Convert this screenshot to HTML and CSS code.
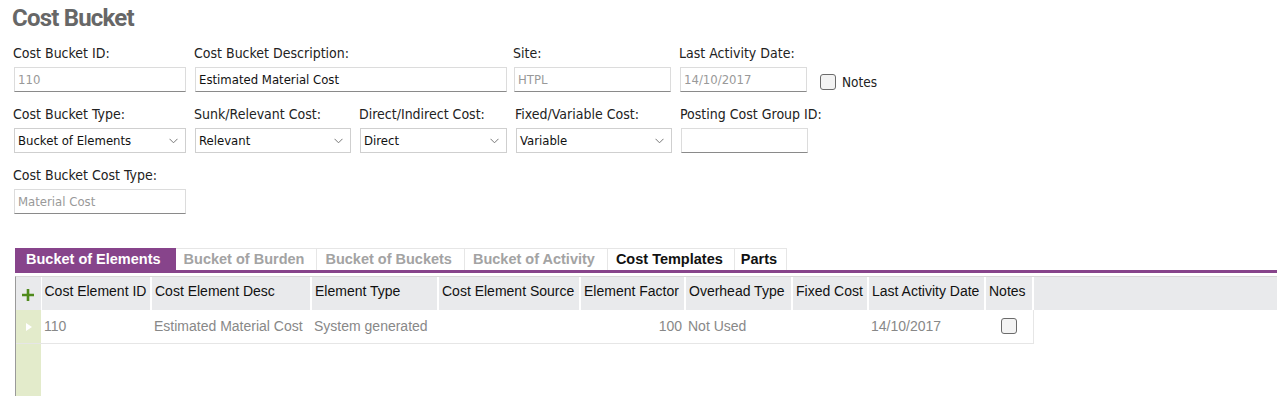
FILE: index.html
```html
<!DOCTYPE html>
<html lang="en">
<head>
    <meta charset="UTF-8">
    <meta name="viewport" content="width=device-width, initial-scale=1.0">
    <title>Cost Bucket</title>
    <link rel="stylesheet" href="styles.css">
</head>
<body>
    <h1 class="page-title">Cost Bucket</h1>

    <div class="form">
        <div class="form-row">
            <div class="field w172">
                <label>Cost Bucket ID:</label>
                <input type="text" class="readonly" value="110" readonly>
            </div>
            <div class="field w312">
                <label>Cost Bucket Description:</label>
                <input type="text" value="Estimated Material Cost">
            </div>
            <div class="field w157 site">
                <label>Site:</label>
                <input type="text" class="readonly" value="HTPL" readonly>
            </div>
            <div class="field w127">
                <label>Last Activity Date:</label>
                <input type="text" class="readonly" value="14/10/2017" readonly>
            </div>
            <label class="notes-check"><span class="box"></span>Notes</label>
        </div>

        <div class="form-row">
            <div class="field w172">
                <label>Cost Bucket Type:</label>
                <div class="select">
                    <span>Bucket of Elements</span>
                    <svg width="9" height="6" viewBox="0 0 9 6"><path d="M0.5 0.8 L4.5 4.8 L8.5 0.8" fill="none" stroke="#777" stroke-width="1"/></svg>
                </div>
            </div>
            <div class="field w156">
                <label>Sunk/Relevant Cost:</label>
                <div class="select">
                    <span>Relevant</span>
                    <svg width="9" height="6" viewBox="0 0 9 6"><path d="M0.5 0.8 L4.5 4.8 L8.5 0.8" fill="none" stroke="#777" stroke-width="1"/></svg>
                </div>
            </div>
            <div class="field w147">
                <label>Direct/Indirect Cost:</label>
                <div class="select">
                    <span>Direct</span>
                    <svg width="9" height="6" viewBox="0 0 9 6"><path d="M0.5 0.8 L4.5 4.8 L8.5 0.8" fill="none" stroke="#777" stroke-width="1"/></svg>
                </div>
            </div>
            <div class="field w156">
                <label>Fixed/Variable Cost:</label>
                <div class="select">
                    <span>Variable</span>
                    <svg width="9" height="6" viewBox="0 0 9 6"><path d="M0.5 0.8 L4.5 4.8 L8.5 0.8" fill="none" stroke="#777" stroke-width="1"/></svg>
                </div>
            </div>
            <div class="field w127">
                <label>Posting Cost Group ID:</label>
                <input type="text" value="">
            </div>
        </div>

        <div class="form-row">
            <div class="field w172">
                <label>Cost Bucket Cost Type:</label>
                <input type="text" class="readonly" value="Material Cost" readonly>
            </div>
        </div>
    </div>

    <div class="tabs">
        <div class="tab active">Bucket of Elements</div>
        <div class="tab disabled">Bucket of Burden</div>
        <div class="tab disabled">Bucket of Buckets</div>
        <div class="tab disabled">Bucket of Activity</div>
        <div class="tab">Cost Templates</div>
        <div class="tab parts">Parts</div>
    </div>

    <div class="grid">
        <table>
            <colgroup>
                <col class="c-strip">
                <col class="c-id">
                <col class="c-desc">
                <col class="c-type">
                <col class="c-source">
                <col class="c-factor">
                <col class="c-overhead">
                <col class="c-fixed">
                <col class="c-last">
                <col class="c-notes">
                <col>
            </colgroup>
            <thead>
                <tr>
                    <th class="strip">
                        <svg width="12" height="12" viewBox="0 0 12 12"><path d="M6 0 V12 M0 6 H12" stroke="#4f8a1c" stroke-width="2.6"/></svg>
                    </th>
                    <th>Cost Element ID</th>
                    <th>Cost Element Desc</th>
                    <th>Element Type</th>
                    <th>Cost Element Source</th>
                    <th>Element Factor</th>
                    <th>Overhead Type</th>
                    <th>Fixed Cost</th>
                    <th>Last Activity Date</th>
                    <th>Notes</th>
                    <th class="filler"></th>
                </tr>
            </thead>
            <tbody>
                <tr class="data">
                    <td class="strip">
                        <svg width="6" height="8" viewBox="0 0 6 8"><path d="M0 0 L6 4 L0 8 Z" fill="#fff"/></svg>
                    </td>
                    <td>110</td>
                    <td>Estimated Material Cost</td>
                    <td>System generated</td>
                    <td></td>
                    <td class="num">100</td>
                    <td>Not Used</td>
                    <td></td>
                    <td>14/10/2017</td>
                    <td class="check"><span class="box"></span></td>
                    <td class="filler"></td>
                </tr>
                <tr class="empty">
                    <td class="strip"></td>
                    <td colspan="10"></td>
                </tr>
            </tbody>
        </table>
    </div>
</body>
</html>
```

FILE: styles.css
```css
body {
    margin: 0;
    padding: 0 0 0 12px;
    background-color: #fff;
    font-family: "DejaVu Sans Condensed", "DejaVu Sans", sans-serif;
    font-size: 14px;
    color: #222;
}

.page-title {
    margin: 0;
    padding-top: 3px;
    height: 42px;
    font-family: Roboto, "DejaVu Sans Condensed", sans-serif;
    font-size: 24px;
    font-weight: bold;
    letter-spacing: -0.8px;
    color: #676767;
    line-height: 30px;
}

.form {
    padding-left: 2px;
}
.form-row {
    display: flex;
    gap: 9px;
    margin-bottom: 14px;
}
.field label {
    display: block;
    height: 16px;
    line-height: 16px;
    margin-bottom: 6px;
    margin-left: -1px;
    white-space: nowrap;
}
.w127 { width: 127px; }
.w147 { width: 147px; }
.w156 { width: 156px; }
.w157 { width: 157px; }
.w172 { width: 172px; }
.w312 { width: 312px; }
.site { margin-left: -2px; }

.field input {
    box-sizing: border-box;
    width: 100%;
    height: 25px;
    margin: 0;
    padding: 0 3px;
    border: 1px solid #dcdcdc;
    border-bottom-color: #8a8a8a;
    font-family: inherit;
    font-size: 13px;
    color: #111;
    background: #fff;
    outline: none;
}
.field input.readonly {
    color: #999;
}

.select {
    box-sizing: border-box;
    display: flex;
    align-items: center;
    justify-content: space-between;
    height: 25px;
    padding: 0 7px 0 3px;
    border: 1px solid #cfcfcf;
    font-size: 13px;
    color: #111;
}

.notes-check {
    display: flex;
    align-items: center;
    align-self: flex-end;
    height: 25px;
    margin-left: 4px;
    margin-bottom: -2px;
    font-size: 13.5px;
}
.box {
    display: inline-block;
    box-sizing: border-box;
    width: 16px;
    height: 16px;
    border: 1px solid #6b6b6b;
    border-radius: 3px;
    background: #f3f3f3;
}
.notes-check .box {
    margin-right: 6px;
}

.tabs {
    display: flex;
    margin: 34px 0 0 3px;
    border-bottom: 3px solid #87448b;
    font-family: "Liberation Sans", Arial, sans-serif;
    font-size: 14.5px;
    font-weight: bold;
}
.tab {
    height: 21px;
    line-height: 21px;
    padding: 0 11px 0 8px;
    border: 1px solid #e6e6e6;
    border-bottom: none;
    border-left: none;
    color: #111;
}
.tab.active {
    padding: 0 14px 0 11px;
    background-color: #87448b;
    border-color: #87448b;
    color: #fff;
}
.tab.disabled {
    padding: 0 12px 0 8px;
    color: #a3a3a3;
}
.tab.parts {
    padding: 0 9px 0 6px;
}

.grid {
    margin: 3px 0 0 3px;
    border-left: 1px solid #9a9a9a;
    border-top: 1px solid #d8d8d8;
    font-family: "Liberation Sans", Arial, sans-serif;
    font-size: 14px;
}
.grid table {
    width: 100%;
    table-layout: fixed;
    border-collapse: collapse;
}
.c-strip { width: 25px; }
.c-id { width: 110px; }
.c-desc { width: 160px; }
.c-type { width: 127px; }
.c-source { width: 142px; }
.c-factor { width: 105px; }
.c-overhead { width: 107px; }
.c-fixed { width: 76px; }
.c-last { width: 117px; }
.c-notes { width: 48px; }

.grid th {
    box-sizing: border-box;
    height: 33px;
    padding: 0 3px 6px;
    background-color: #e9eaec;
    border-right: 2px solid #fff;
    font-weight: normal;
    text-align: left;
    color: #111;
    white-space: nowrap;
    overflow: hidden;
}
.grid th.strip {
    padding: 5px 0 0 0;
    text-align: center;
    border-right: 1px solid #fff;
}
.grid th.filler {
    border-right: none;
}

.grid td {
    box-sizing: border-box;
    height: 33px;
    padding: 0 3px;
    color: #888;
    white-space: nowrap;
    overflow: hidden;
}
.grid tr.data td {
    border-bottom: 1px solid #e6e6e6;
}
.grid tr.data td.check {
    border-right: 1px solid #e6e6e6;
    text-align: center;
    padding-top: 3px;
}
.grid tr.data td.filler {
    border-bottom: none;
}
.grid td.num {
    text-align: right;
}
.grid td.strip {
    padding: 0 0 0 10px;
    background-color: #e3ebcb;
    border-bottom: none;
}
.grid tr.empty td {
    height: 60px;
}
```
